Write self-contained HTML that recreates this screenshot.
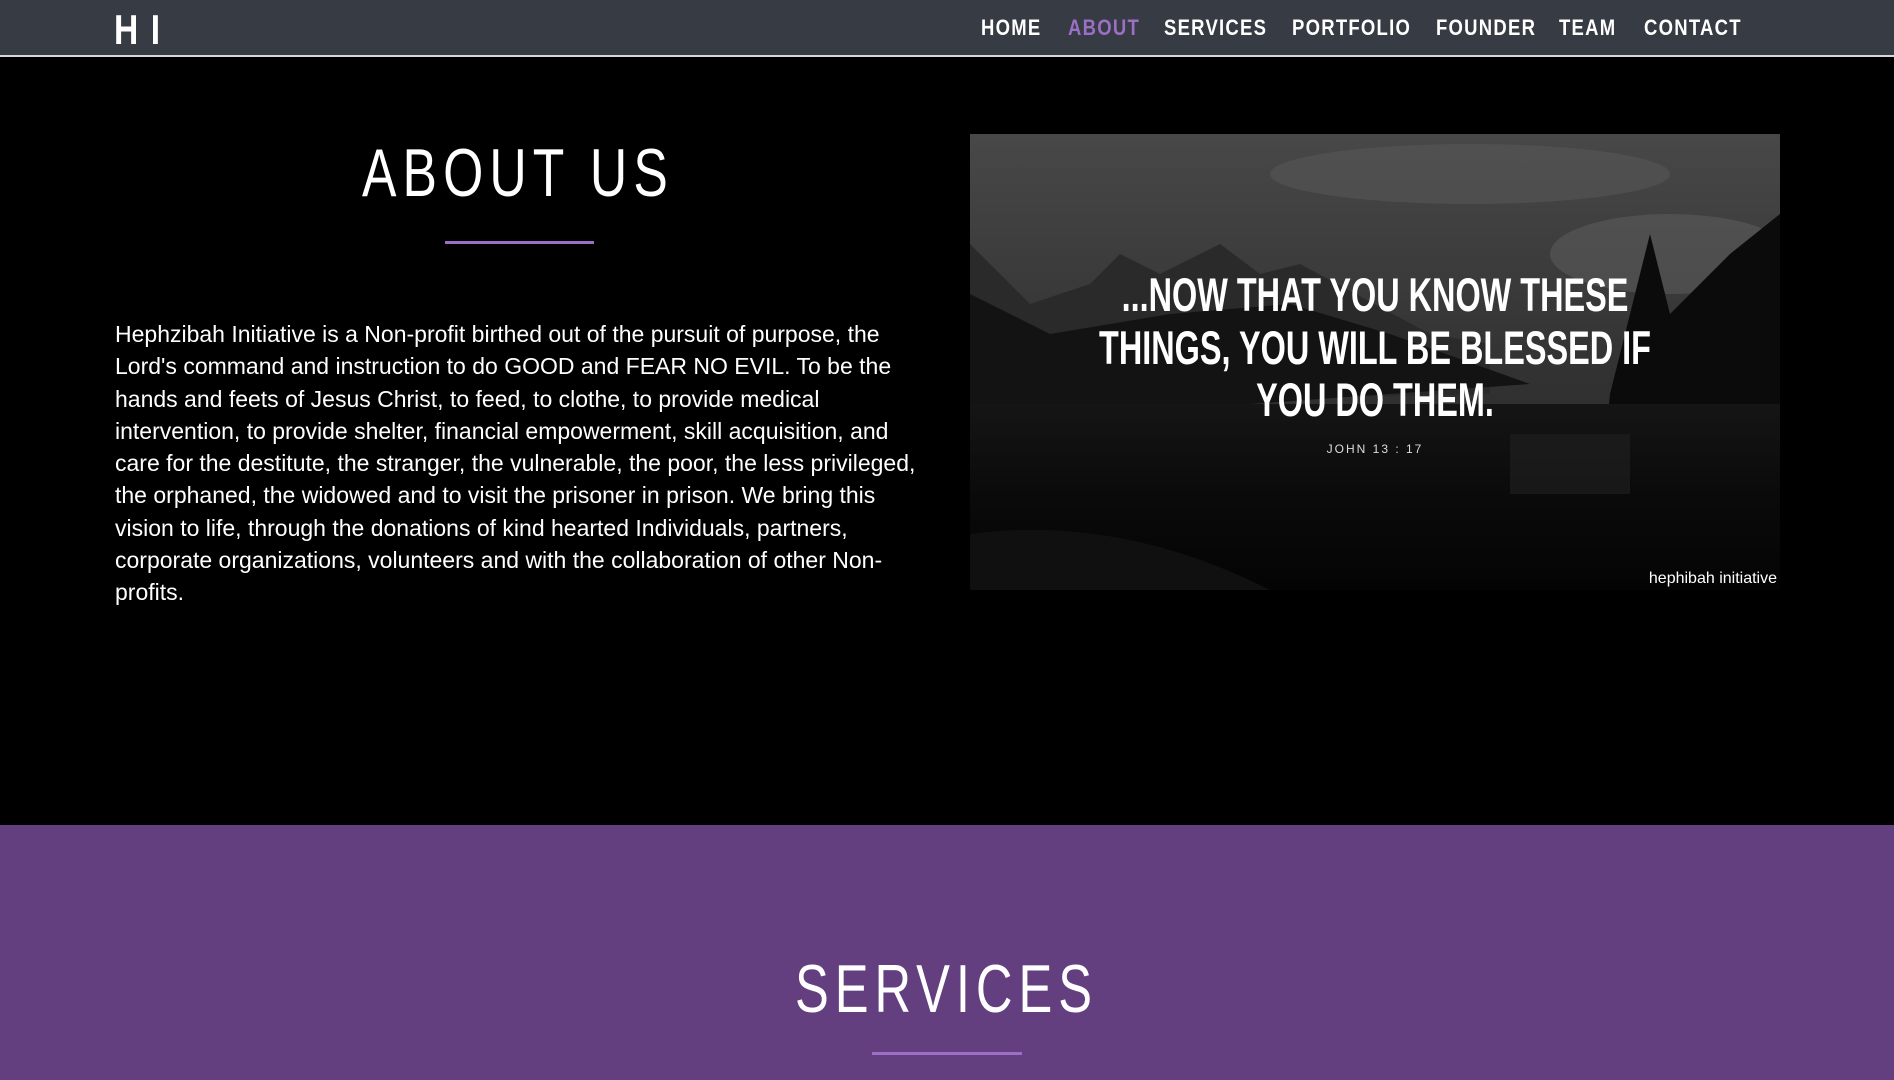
<!DOCTYPE html>
<html><head><meta charset="utf-8"><style>
*{margin:0;padding:0;box-sizing:border-box}
body{width:1894px;height:1080px;background:#000;overflow:hidden;font-family:"Liberation Sans",sans-serif;position:relative}
.hdr{position:absolute;left:0;top:0;width:1894px;height:57px;background:#373b43;border-bottom:2px solid #d8d8d8}
.logo{position:absolute;left:114px;top:6px;color:#fff;font-weight:bold;font-size:42px;transform:scaleX(.8);transform-origin:left;letter-spacing:2px}
.nav{position:absolute;top:15px;color:#fff;font-weight:bold;font-size:22px;white-space:nowrap;transform-origin:left;letter-spacing:1.5px}
.h2{position:absolute;color:#fff;font-weight:300;font-size:68px;letter-spacing:8px;white-space:nowrap;transform-origin:left}
.line{position:absolute;height:3px;background:#9b6fc6}
.p{position:absolute;left:115px;top:318px;color:#fff;font-size:23px;line-height:32.3px;white-space:nowrap}
.img{position:absolute;left:970px;top:134px;width:810px;height:456px;overflow:hidden}
.q{position:absolute;left:0;width:810px;text-align:center;color:#fff;font-weight:bold;font-size:47px;transform:scaleX(.69);white-space:nowrap}
.svc{position:absolute;left:0;top:825px;width:1894px;height:255px;background:#633f80}
</style></head><body>
<div class="hdr">
<div class="logo">H I</div>
<div class="nav" style="left:981px;transform:scaleX(.84)">HOME</div>
<div class="nav" style="left:1068px;color:#9b6fc6;transform:scaleX(.84)">ABOUT</div>
<div class="nav" style="left:1164px;transform:scaleX(.84)">SERVICES</div>
<div class="nav" style="left:1292px;transform:scaleX(.84)">PORTFOLIO</div>
<div class="nav" style="left:1436px;transform:scaleX(.84)">FOUNDER</div>
<div class="nav" style="left:1559px;transform:scaleX(.84)">TEAM</div>
<div class="nav" style="left:1644px;transform:scaleX(.84)">CONTACT</div>
</div>
<div class="h2" style="left:362px;top:134px;transform:scaleX(.76)">ABOUT US</div>
<div class="line" style="left:445px;top:241px;width:149px"></div>
<div class="p">Hephzibah Initiative is a Non-profit birthed out of the pursuit of purpose, the<br>Lord's command and instruction to do GOOD and FEAR NO EVIL. To be the<br>hands and feets of Jesus Christ, to feed, to clothe, to provide medical<br>intervention, to provide shelter, financial empowerment, skill acquisition, and<br>care for the destitute, the stranger, the vulnerable, the poor, the less privileged,<br>the orphaned, the widowed and to visit the prisoner in prison. We bring this<br>vision to life, through the donations of kind hearted Individuals, partners,<br>corporate organizations, volunteers and with the collaboration of other Non-<br>profits.</div>
<div class="img">
<svg width="810" height="456" viewBox="0 0 810 456">
<defs>
<linearGradient id="sky" x1="0" y1="0" x2="0" y2="1"><stop offset="0" stop-color="#484848"/><stop offset=".5" stop-color="#333"/><stop offset="1" stop-color="#222"/></linearGradient>
<linearGradient id="w" x1="0" y1="0" x2="0" y2="1"><stop offset="0" stop-color="#151515"/><stop offset=".5" stop-color="#0a0a0a"/><stop offset="1" stop-color="#040404"/></linearGradient>
</defs>
<rect width="810" height="456" fill="url(#sky)"/>
<ellipse cx="500" cy="40" rx="200" ry="30" fill="#5a5a5a" opacity=".5"/>
<ellipse cx="700" cy="120" rx="120" ry="40" fill="#606060" opacity=".5"/>
<path d="M0 110 L60 170 L120 150 L150 120 L190 140 L250 110 L290 140 L330 130 L460 200 L520 210 L520 260 L0 270Z" fill="#2a2a2a"/>
<path d="M0 160 L80 200 L200 180 L320 170 L420 200 L560 250 L0 290Z" fill="#131313"/>
<path d="M680 100 L700 180 L760 120 L810 80 L810 456 L620 456 L640 260Z" fill="#0b0b0b"/>
<rect y="270" width="810" height="186" fill="url(#w)"/>
<rect x="540" y="300" width="120" height="60" fill="#222" opacity=".6"/>
<path d="M0 400 Q150 380 300 456 L0 456Z" fill="#101010"/>
</svg>
<div class="q" style="top:133px">...NOW THAT YOU KNOW THESE</div>
<div class="q" style="top:186px">THINGS, YOU WILL BE BLESSED IF</div>
<div class="q" style="top:238px">YOU DO THEM.</div>
<div style="position:absolute;top:308px;left:0;width:810px;text-align:center;color:#ddd;font-size:12px;letter-spacing:2px">JOHN 13 : 17</div>
<div style="position:absolute;top:436px;right:3px;color:#fff;font-size:16px">hephibah initiative</div>
</div>
<div class="svc">
<div class="h2" style="left:795px;top:125px;transform:scaleX(.745)">SERVICES</div>
<div class="line" style="left:872px;top:227px;width:150px"></div>
</div>
</body></html>
